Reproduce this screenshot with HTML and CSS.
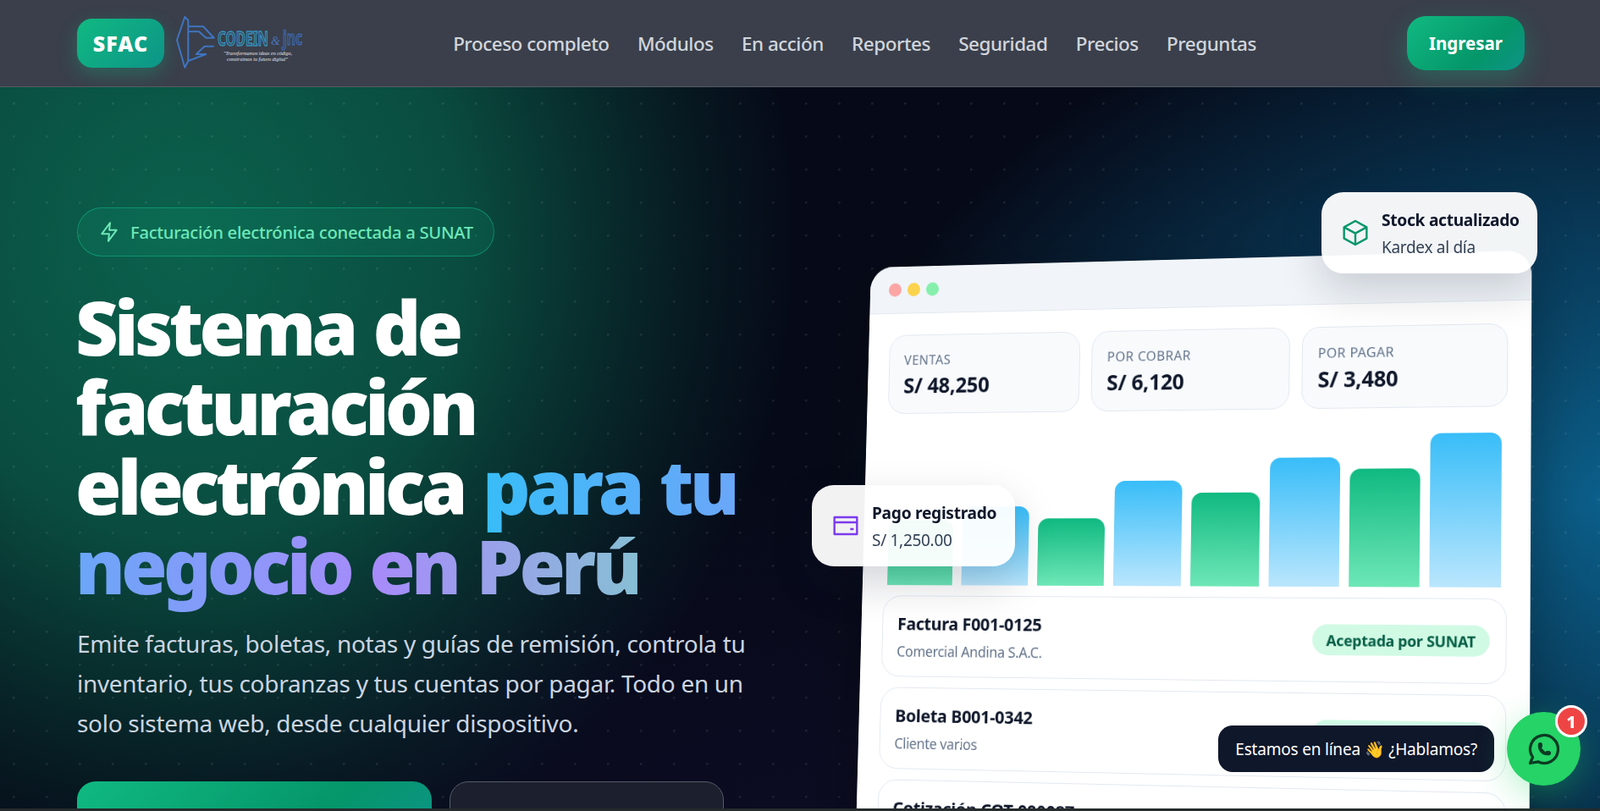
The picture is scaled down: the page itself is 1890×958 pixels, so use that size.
FILE: index.html
```html
<!DOCTYPE html>
<html lang="es">
<head>
    <meta charset="UTF-8">
    <title>SFAC – Sistema de facturación electrónica</title>
    <meta name="viewport" content="width=device-width, initial-scale=1">
    <link rel="stylesheet" href="styles.css">
</head>
<body>
<header class="nav">
    <div class="brand">
        <a class="brand-mark" href="#">SFAC</a>
        <svg class="codein" viewBox="0 0 152 64" aria-label="Codein & jnc">
            <g fill="none" stroke="#3f74c0" stroke-width="2" stroke-linejoin="round">
                <path d="M10.300 1 1 28.300 10.300 60.700 14.300 53V5z"/>
                <path d="M14.300 12.300H32L44.700 25.700H35.300L27 18.300H14.300"/>
                <path d="M44.700 35.700H33.700L23.700 45H35.300L14.300 53"/>
            </g>
            <text class="codein-name" x="49" y="35" textLength="60" lengthAdjust="spacingAndGlyphs">CODEIN</text>
            <text class="codein-amp" x="112" y="34">&amp;</text>
            <text class="codein-jnc" x="126" y="34" textLength="23" lengthAdjust="spacingAndGlyphs">jnc</text>
            <text class="codein-tag" x="56" y="46" textLength="81" lengthAdjust="spacingAndGlyphs">"Transformamos ideas en código,</text>
            <text class="codein-tag" x="60" y="53" textLength="72" lengthAdjust="spacingAndGlyphs">construimos tu futuro digital"</text>
        </svg>
    </div>
    <nav class="nav-links">
        <a href="#">Proceso completo</a>
        <a href="#">Módulos</a>
        <a href="#">En acción</a>
        <a href="#">Reportes</a>
        <a href="#">Seguridad</a>
        <a href="#">Precios</a>
        <a href="#">Preguntas</a>
    </nav>
    <a class="btn-login" href="#">Ingresar</a>
</header>

<main class="hero">
    <!-- Left text column -->
    <section class="hero-copy">
        <div class="pill">
            <svg class="pill-icon" viewBox="0 0 24 24"><path d="M13 2 4 14h8l-1 8 9-12h-8l1-8z"/></svg>
            Facturación electrónica conectada a SUNAT
        </div>
        <h1>Sistema de facturación electrónica <span class="grad">para tu negocio en Perú</span></h1>
        <p class="lead">Emite facturas, boletas, notas y guías de remisión, controla tu inventario, tus cobranzas y tus cuentas por pagar. Todo en un solo sistema web, desde cualquier dispositivo.</p>
        <div class="cta">
            <a class="btn-main" href="#">Solicitar demostración</a>
            <a class="btn-alt" href="#">Ver cómo funciona</a>
        </div>
    </section>

    <!-- Right app mockup -->
    <section class="stage">
        <div class="window">
            <div class="window-bar">
                <i class="dot red"></i><i class="dot yellow"></i><i class="dot green"></i>
            </div>
            <div class="window-body">
                <div class="stats">
                    <div class="stat"><small>Ventas</small><b>S/ 48,250</b></div>
                    <div class="stat"><small>Por cobrar</small><b>S/ 6,120</b></div>
                    <div class="stat"><small>Por pagar</small><b>S/ 3,480</b></div>
                </div>
                <div class="chart">
                    <div class="bar g" style="height:44%"></div>
                    <div class="bar b" style="height:53%"></div>
                    <div class="bar g" style="height:45%"></div>
                    <div class="bar b" style="height:70%"></div>
                    <div class="bar g" style="height:62%"></div>
                    <div class="bar b" style="height:85%"></div>
                    <div class="bar g" style="height:77%"></div>
                    <div class="bar b" style="height:100%"></div>
                </div>
                <div class="row">
                    <div><b>Factura F001-0125</b><small>Comercial Andina S.A.C.</small></div>
                    <span class="tag">Aceptada por SUNAT</span>
                </div>
                <div class="row">
                    <div><b>Boleta B001-0342</b><small>Cliente varios</small></div>
                    <span class="tag">Aceptada por SUNAT</span>
                </div>
                <div class="row">
                    <div><b>Cotización COT-000087</b><small>Servicios del Sur E.I.R.L.</small></div>
                    <span class="tag">Pendiente</span>
                </div>
            </div>
        </div>
    </section>

    <div class="float float-stock">
        <svg class="float-icon box" viewBox="0 0 24 24"><path d="M12 1.500l10 5.500v10l-10 5.500-10-5.500V7z"/><path d="M2 7l10 5.500L22 7M12 12.500v10"/></svg>
        <div><b>Stock actualizado</b><span>Kardex al día</span></div>
    </div>
    <div class="float float-pay">
        <svg class="float-icon card" viewBox="0 0 24 24"><path d="M2 4.500h20v15H2zM2 9h20M16 15h3"/></svg>
        <div><b>Pago registrado</b><span>S/ 1,250.00</span></div>
    </div>
</main>
<div class="page-edge"></div>

<!-- WhatsApp floating button -->
<div class="wa">
    <div class="wa-tip">Estamos en línea 👋 ¿Hablamos?</div>
    <a class="wa-btn" href="#">
        <svg viewBox="0 0 24 24"><path d="M3 21l1.650-3.800a9 9 0 1 1 3.400 2.900L3 21"/><path class="wa-phone" d="M9 10a.5.5 0 0 0 1 0V9a.5.5 0 0 0-1 0v1a5 5 0 0 0 5 5h1a.5.5 0 0 0 0-1h-1a.5.5 0 0 0 0 1"/></svg>
        <span class="wa-count">1</span>
    </a>
</div>
</body>
</html>
```

FILE: styles.css
```css
* { box-sizing: border-box; }
html, body { margin: 0; height: 958px; overflow: hidden; }
body { font-family: "Noto Sans", "Open Sans", sans-serif; background: #060a18; display: flex; flex-direction: column; }
a { color: inherit; text-decoration: none; }

/* Top bar */
.nav { height: 103px; flex: none; background: #3a3f4b; border-bottom: 1px solid #565b62; padding: 0 89px 0 91px; display: flex; align-items: center; justify-content: space-between; position: relative; z-index: 5; }
.brand { display: flex; align-items: center; gap: 14px; width: 266px; margin-top: -1px; }
.brand-mark { width: 103px; height: 58px; border-radius: 18px; background: linear-gradient(135deg, #10b981, #0d9488); color: #fff; font-weight: 900; font-size: 25px; letter-spacing: 1px; display: flex; align-items: center; justify-content: center; box-shadow: 0 8px 22px rgba(16,185,129,.3); flex: none; }
.codein { width: 152px; height: 64px; flex: none; }
.codein-name { font-size: 23px; font-weight: 700; fill: rgba(46,154,198,.25); stroke: #35a7d4; stroke-width: 1; }
.codein-amp { font-size: 14px; fill: #4a73b8; font-family: "Liberation Serif", serif; font-style: italic; }
.codein-jnc { font-size: 23px; font-weight: 700; fill: rgba(58,102,180,.3); stroke: #3f70c0; stroke-width: 1; }
.codein-tag { font-size: 5.500px; fill: #e5e7eb; font-family: "Liberation Serif", serif; font-style: italic; }
.nav-links { display: flex; gap: 33.300px; font-size: 22.500px; font-weight: 500; color: #d1d5db; letter-spacing: -.5px; }
.btn-login { width: 139px; height: 64px; border-radius: 22px; background: linear-gradient(135deg, #10b981, #059669 65%, #0d9488); color: #fff; font-weight: 700; font-size: 20.500px; display: flex; align-items: center; justify-content: center; box-shadow: 0 10px 30px rgba(16,185,129,.3); margin-top: -1px; }

/* Hero */
.hero { flex: 1; min-height: 0; position: relative; overflow: hidden; display: flex; justify-content: space-between; padding: 142px 82px 0 91px;
    background:
        radial-gradient(circle at 1px 1px, rgba(255,255,255,.08) 1.400px, transparent 2px) 15px 18px / 39px 39px,
        radial-gradient(ellipse 720px 780px at 220px 180px, rgba(16,185,129,.5), rgba(16,185,129,.38) 45%, rgba(16,185,129,.22) 65%, rgba(16,185,129,.08) 85%, transparent 100%),
        radial-gradient(ellipse 900px 640px at 100% 57%, rgba(14,165,233,.55), rgba(14,165,233,.3) 50%, rgba(14,165,233,.15) 75%, transparent 100%),
        radial-gradient(ellipse 800px 400px at 50% 100%, rgba(76,29,149,.08), transparent 100%),
        #060a18;
}
.hero-copy { width: 810px; flex: none; }
.pill { display: inline-flex; align-items: center; gap: 12px; height: 58px; padding: 0 24px; border: 1px solid rgba(16,185,129,.55); border-radius: 30px; background: rgba(16,185,129,.12); color: #6ee7b7; font-size: 20.250px; font-weight: 500; letter-spacing: -.3px; }
.pill-icon { width: 26px; height: 26px; fill: none; stroke: #6ee7b7; stroke-width: 1.800; stroke-linejoin: round; }
h1 { margin: 36px 0 0 -2px; width: 800px; font-size: 88px; line-height: 94px; font-weight: 900; color: #fff; letter-spacing: -4.700px; word-spacing: 4px; }
.grad { background: linear-gradient(90deg, #38bdf8 0%, #a78bfa 68%, #6ee7b7 125%); -webkit-background-clip: text; background-clip: text; color: transparent; }
.lead { margin: 22px 0 0; font-size: 28px; line-height: 47px; color: #cbd5e1; letter-spacing: -.3px; }
.cta { display: flex; gap: 21px; margin-top: 45px; }
.btn-main, .btn-alt { height: 80px; border-radius: 22px; font-size: 22px; font-weight: 700; color: #fff; display: flex; align-items: center; justify-content: center; }
.btn-main { width: 419px; background: linear-gradient(135deg, #10b981, #059669 65%, #0d9488); }
.btn-alt { width: 324px; background: #1c202e; border: 1px solid #565b68; }

/* App mockup */
.stage { flex: none; width: 842px; }
.window { width: 842px; height: 720px; margin-top: 47px; background: #fff; border-radius: 30px 30px 0 0; overflow: hidden; box-shadow: 0 30px 80px rgba(0,0,0,.35); transform-origin: 100% 350px; transform: perspective(1400px) rotateY(-6deg) rotateX(2.300deg); }
.window-bar { height: 60px; background: #f1f5f9; border-bottom: 1px solid #e2e8f0; display: flex; align-items: center; gap: 8px; padding-left: 25px; }
.dot { width: 17px; height: 17px; border-radius: 50%; }
.dot.red { background: #fca5a5; }
.dot.yellow { background: #fcd34d; }
.dot.green { background: #86efac; }
.window-body { padding: 27px 28px; }
.stats { display: grid; grid-template-columns: 1fr 1fr 1fr; gap: 15px; }
.stat { height: 100px; padding: 19px 19px; border: 1px solid #e2e8f0; border-radius: 22px; background: #f8fafc; }
.stat small { display: block; font-size: 16.500px; letter-spacing: .5px; color: #64748b; text-transform: uppercase; }
.stat b { display: block; margin-top: 3px; font-size: 26.500px; color: #0f172a; letter-spacing: -.2px; }
.chart { height: 184px; margin-top: 31px; display: flex; align-items: flex-end; gap: 12px; padding: 0 7px 0 5px; }
.bar { flex: 1; border-radius: 13px 13px 0 0; }
.bar.g { background: linear-gradient(180deg, #10b981, #6ee7b7); }
.bar.b { background: linear-gradient(180deg, #38bdf8, #bae6fd); }
.row { height: 101px; margin-top: 13px; padding: 0 19px 0 19px; border: 1px solid #e2e8f0; border-radius: 24px; background: #fff; display: flex; align-items: center; justify-content: space-between; }
.row b { display: block; font-size: 21.800px; color: #0f172a; letter-spacing: -.3px; }
.row small { display: block; margin-top: 8px; font-size: 17.800px; color: #64748b; letter-spacing: -.3px; }
.tag { height: 37px; padding: 0 17px; border-radius: 19px; background: #d1fae5; color: #065f46; font-size: 18.200px; font-weight: 700; letter-spacing: -.3px; display: flex; align-items: center; }

/* Floating cards */
.float { position: absolute; display: flex; align-items: center; gap: 15px; padding: 0 12px 0 24px; height: 96px; border-radius: 26px; background: rgba(255,255,255,.95); box-shadow: 0 20px 50px rgba(15,23,42,.18); color: #0f172a; }
.float b { display: block; font-size: 19.200px; letter-spacing: -.3px; white-space: nowrap; }
.float span { display: block; margin-top: 6px; font-size: 19px; color: #334155; letter-spacing: -.3px; }
.float-stock { left: 1561px; top: 124px; width: 255px; }
.float-pay { left: 959px; top: 470px; width: 240px; }
.float-icon { width: 32px; height: 32px; flex: none; fill: none; stroke-width: 1.800; stroke-linejoin: round; }
.box { stroke: #059669; }
.card { stroke: #7c3aed; }

.page-edge { height: 3px; flex: none; background: #262b2b; }

/* WhatsApp */
.wa { position: fixed; right: 23px; bottom: 30px; display: flex; align-items: center; gap: 15px; z-index: 9; }
.wa-tip { height: 55px; padding: 0 20px; border-radius: 17px; background: #0f172a; color: #fff; font-size: 19px; letter-spacing: -.2px; display: flex; align-items: center; white-space: nowrap; }
.wa-btn { width: 87px; height: 87px; border-radius: 50%; background: #25d366; display: flex; align-items: center; justify-content: center; position: relative; box-shadow: 0 10px 40px rgba(37,211,102,.35); }
.wa-btn svg { width: 44px; height: 44px; fill: none; stroke: #0b3b24; stroke-width: 1.800; stroke-linecap: round; stroke-linejoin: round; }
.wa-btn .wa-phone { fill: #0b3b24; }
.wa-count { position: absolute; top: -8px; right: -8px; width: 38px; height: 38px; border-radius: 50%; border: 3px solid #fff; background: #ef4444; color: #fff; font-size: 20px; font-weight: 800; display: flex; align-items: center; justify-content: center; }
```
